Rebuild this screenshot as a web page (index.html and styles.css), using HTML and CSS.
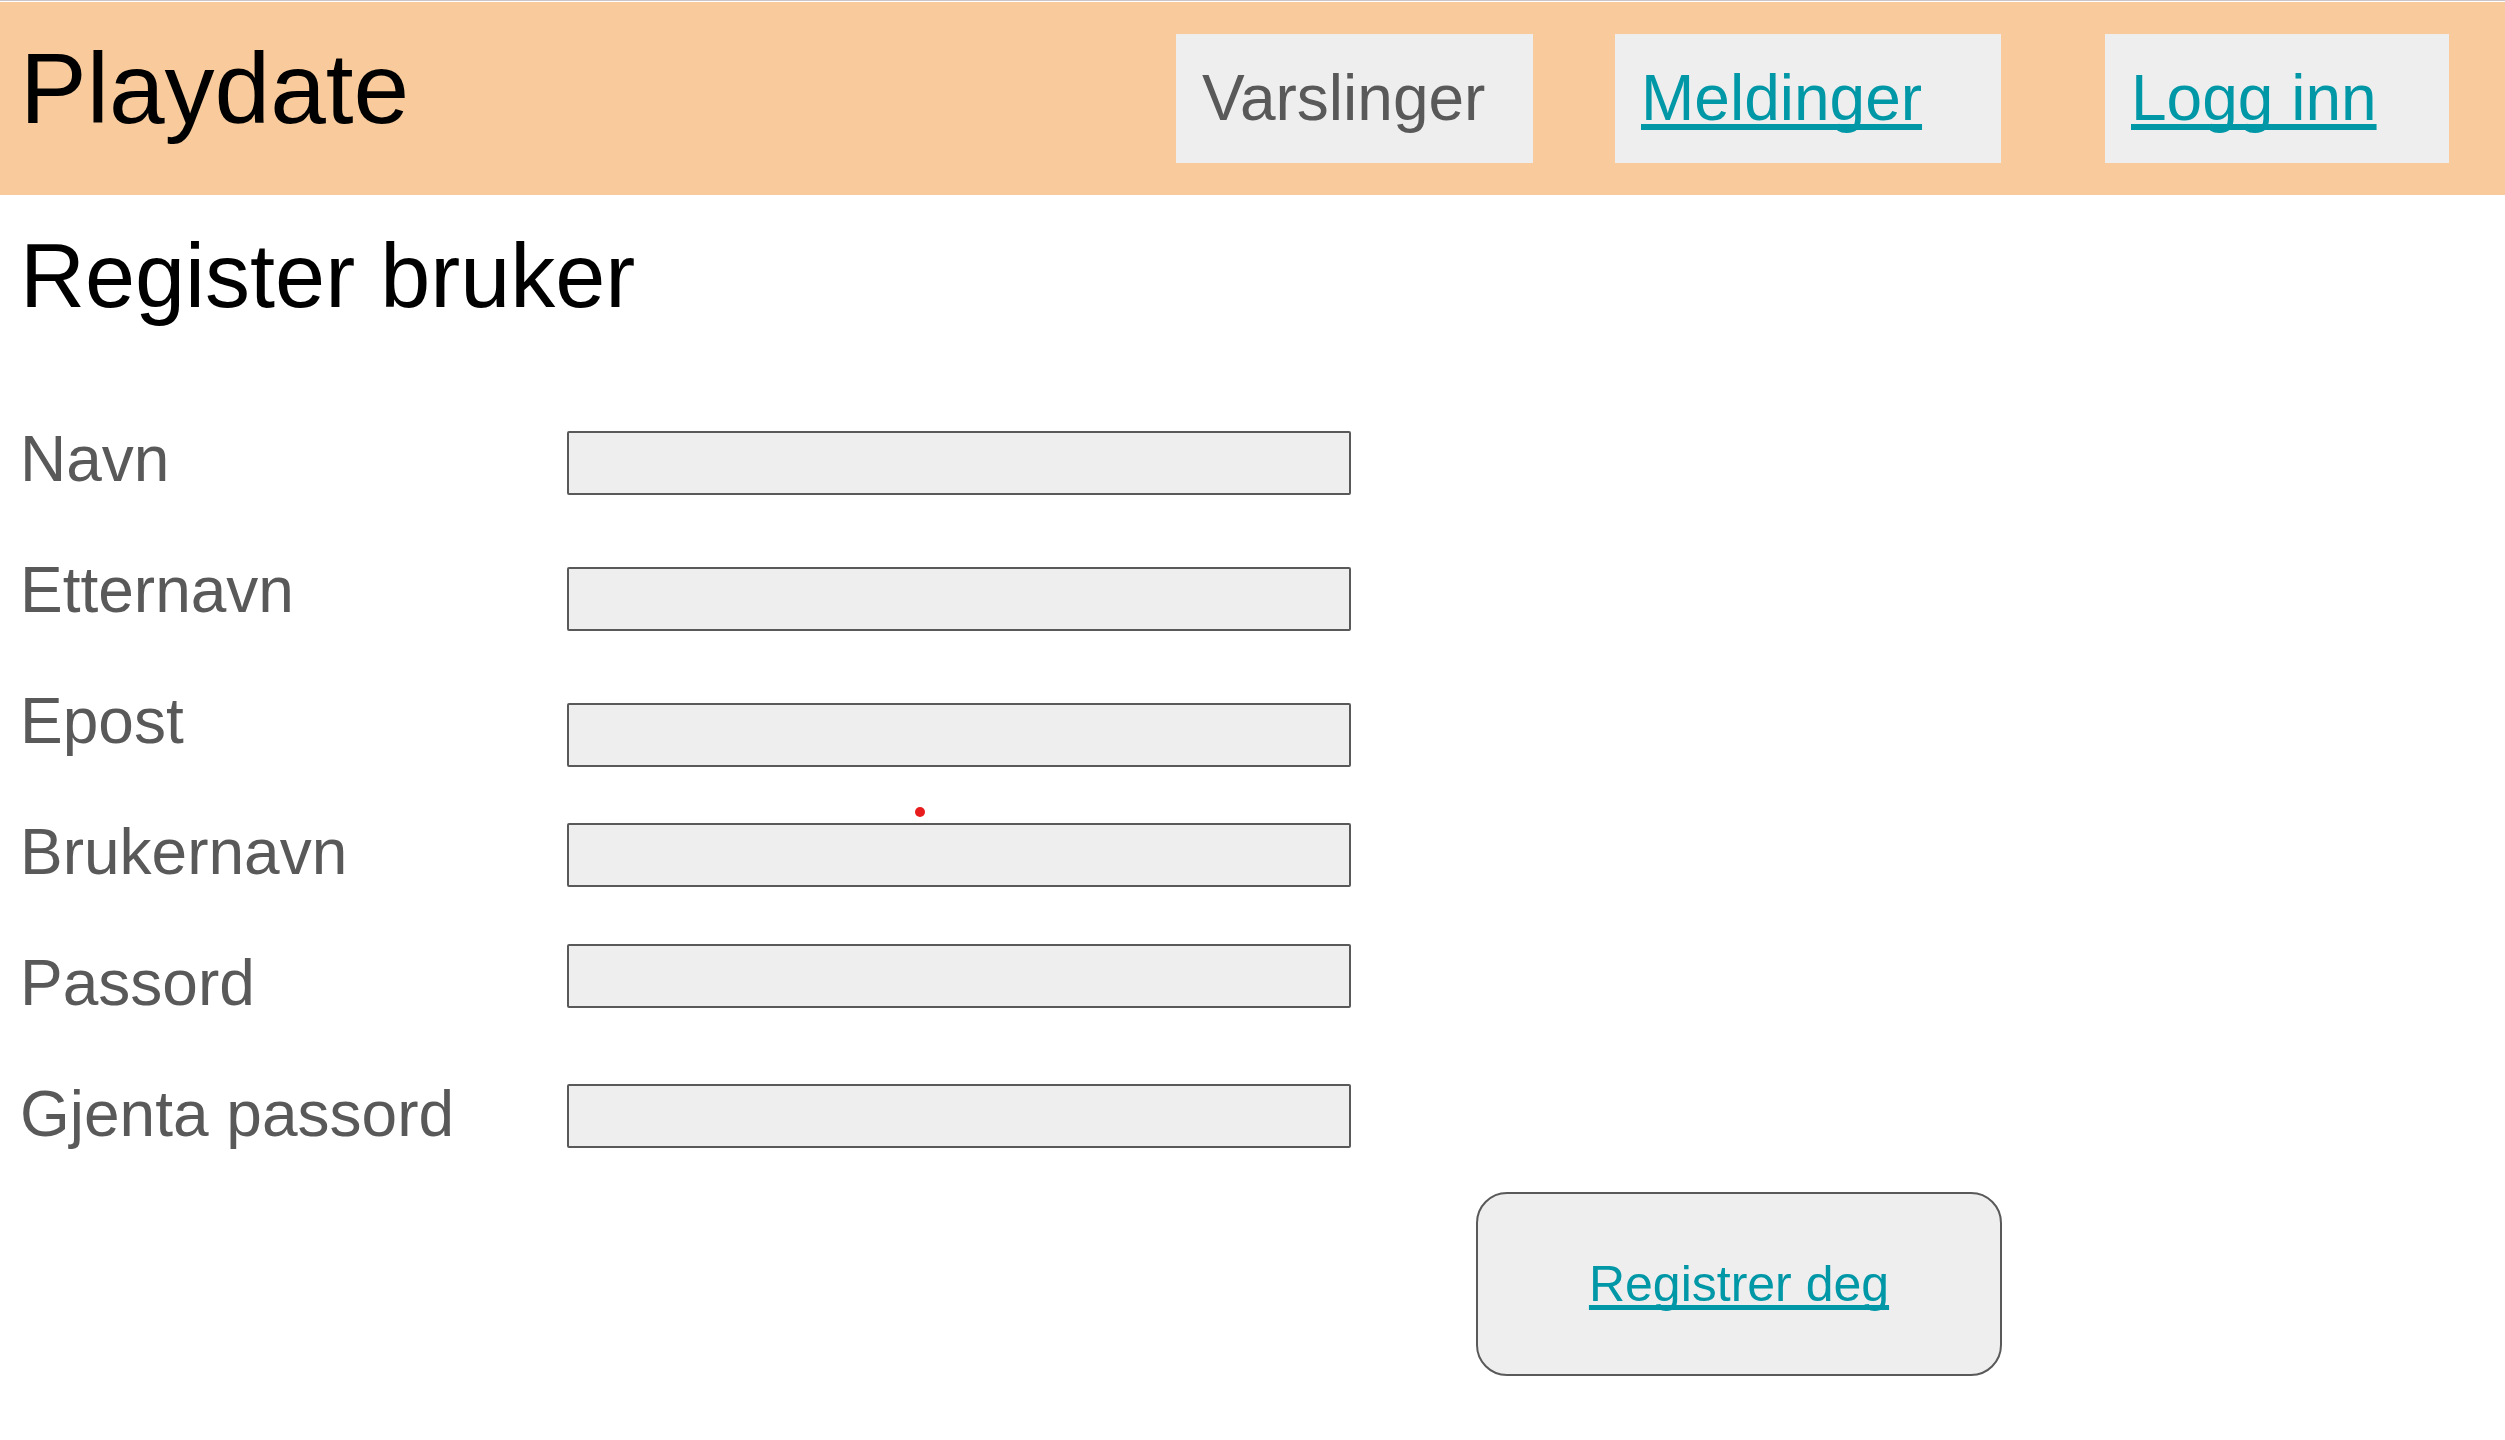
FILE: index.html
```html
<!DOCTYPE html>
<html lang="nb">
<head>
  <meta charset="utf-8">
  <meta name="viewport" content="width=device-width, initial-scale=1">
  <title>Playdate – Register bruker</title>
  <link rel="stylesheet" href="styles.css">
</head>
<body>
  <header class="site-header">
    <p class="brand">Playdate</p>
    <nav class="site-nav">
      <span class="nav-box nav-box-notices">Varslinger</span>
      <a class="nav-box nav-box-messages" href="#meldinger">Meldinger</a>
      <a class="nav-box nav-box-login" href="#logg-inn">Logg inn</a>
    </nav>
  </header>
  <main class="page">
    <h1 class="page-title">Register bruker</h1>
    <form class="register-form">
      <div class="form-columns">
        <div class="labels">
          <label for="navn">Navn</label>
          <label for="etternavn">Etternavn</label>
          <label for="epost">Epost</label>
          <label for="brukernavn">Brukernavn</label>
          <label for="passord">Passord</label>
          <label for="gjenta">Gjenta passord</label>
        </div>
        <div class="fields">
          <div class="field-group">
            <input class="field" id="navn" type="text">
            <input class="field" id="etternavn" type="text">
            <input class="field" id="epost" type="email">
          </div>
          <div class="field-group field-group-account">
            <input class="field" id="brukernavn" type="text">
            <input class="field" id="passord" type="password">
            <span class="pointer-dot"></span>
          </div>
          <input class="field" id="gjenta" type="password">
        </div>
      </div>
      <button class="submit" type="button">Registrer deg</button>
    </form>
  </main>
</body>
</html>
```
FILE: styles.css
```css
* {
  box-sizing: border-box;
}

body {
  margin: 0;
  background: #fff;
  color: #595959;
  font-family: "Liberation Sans", Arial, sans-serif;
  font-size: 64px;
}

.site-header {
  display: flex;
  justify-content: space-between;
  align-items: flex-start;
  padding: 33px 56px 32px 20px;
  border-top: 1px solid #c9c5c9;
  background: #f9cb9c;
  box-shadow: inset 0 1px #fff;
}

.brand {
  margin: 0;
  color: #000;
  font-size: 100px;
  line-height: 108px;
}

.site-nav {
  display: flex;
}

.nav-box {
  padding: 28px 26px;
  background: #eee;
  line-height: 73px;
}

.nav-box-notices {
  width: 357px;
  margin-right: 82px;
}

.nav-box-messages {
  width: 386px;
  margin-right: 104px;
}

.nav-box-login {
  width: 344px;
}

a,
.submit {
  color: #0097a7;
  text-decoration: underline;
  text-decoration-thickness: 6px;
  text-decoration-skip-ink: none;
  text-underline-offset: 4px;
}

.page {
  padding: 29px 20px 64px;
}

.page-title {
  margin: 0 0 94px;
  color: #000;
  font-size: 90px;
  font-weight: 400;
  line-height: 104px;
}

.form-columns {
  display: flex;
}

.labels {
  flex: 0 1 547px;
  display: flex;
  flex-direction: column;
  gap: 57px;
}

.labels label {
  line-height: 74px;
}

.fields {
  flex: 0 1 784px;
  display: flex;
  flex-direction: column;
  padding-top: 9px;
}

.field-group {
  position: relative;
  display: flex;
  flex-direction: column;
  gap: 72px;
  margin-bottom: 56px;
}

.field-group-account {
  gap: 57px;
  margin-bottom: 76px;
}

.field {
  width: 100%;
  height: 64px;
  padding: 0 16px;
  border: 2px solid #595959;
  border-radius: 2px;
  background: #eee;
  color: inherit;
  font: inherit;
  font-size: 40px;
}

.pointer-dot {
  position: absolute;
  top: -16px;
  left: 348px;
  width: 10px;
  height: 10px;
  border-radius: 50%;
  background: #e81c1c;
}

.submit {
  display: block;
  width: 526px;
  height: 184px;
  margin: 41px 0 0 1456px;
  border: 2px solid #595959;
  border-radius: 31px;
  background: #eee;
  font: inherit;
  font-size: 50px;
  text-decoration-thickness: 5px;
}
```
